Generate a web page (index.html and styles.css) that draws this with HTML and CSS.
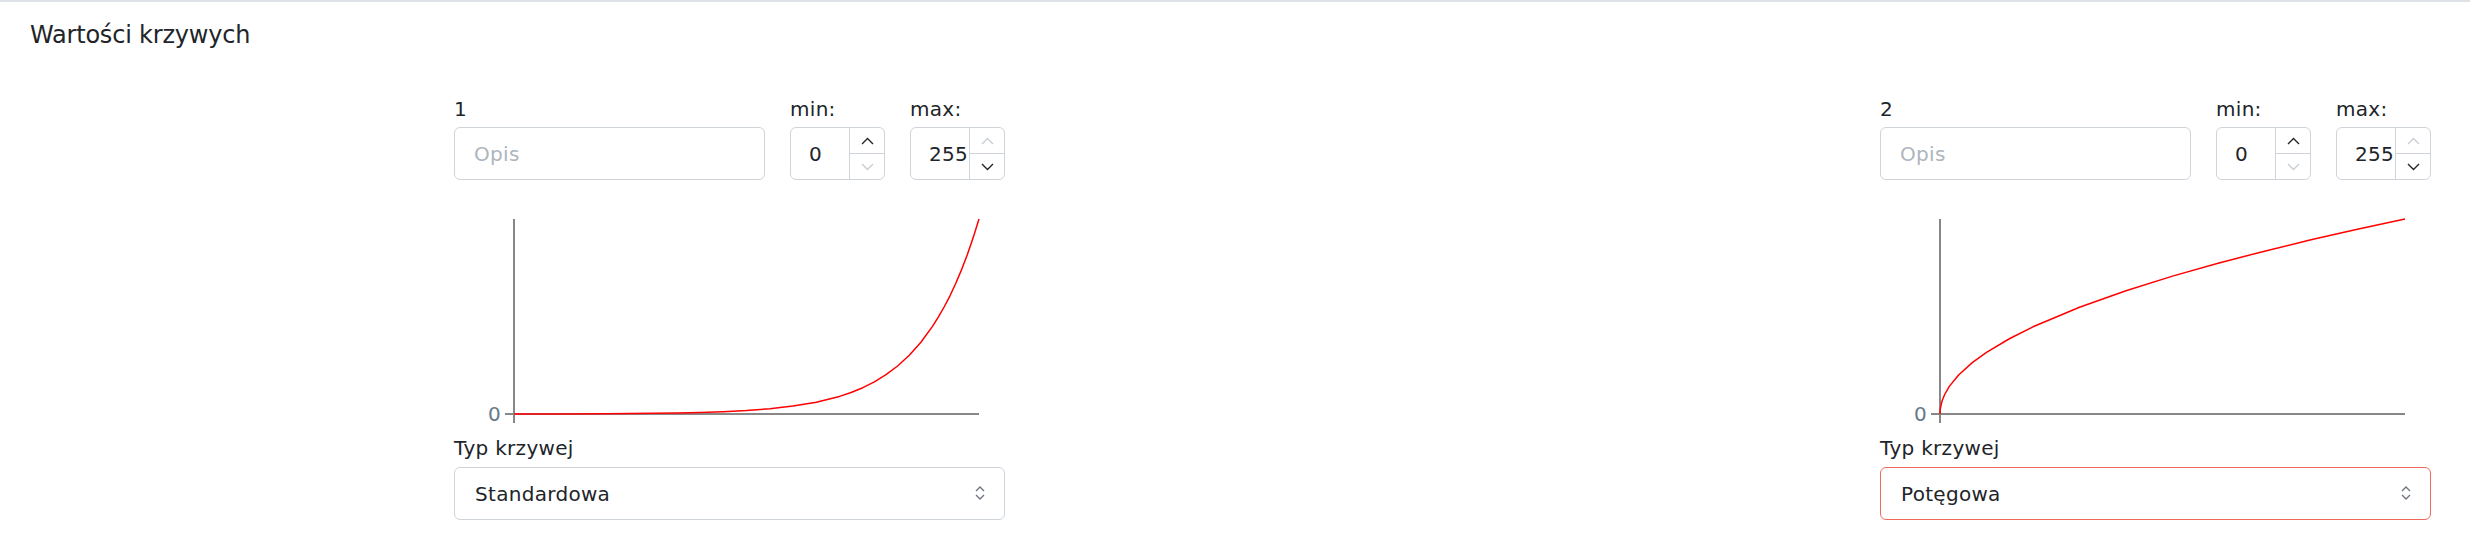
FILE: index.html
```html
<!DOCTYPE html>
<html lang="pl">
  <head>
    <meta charset="utf-8">
    <title>Wartości krzywych</title>
    <link rel="stylesheet" href="styles.css">
  </head>

  <body>
    <div class="card">
      <div class="card-title">Wartości krzywych</div>

      <div class="curves">
        <!-- krzywa 1 -->
        <div class="curve-panel">
          <div class="fields">
            <div class="field">
              <label>1</label>
              <input class="form-control" type="text" placeholder="Opis">
            </div>
            <div class="field">
              <label>min:</label>
              <div class="spin-input">
                <input type="text" value="0">
                <div class="spin-buttons">
                  <span class="spin-btn"><svg width="13" height="8" viewBox="0 0 13 8"><path d="M1 7L6.5 1.5L12 7"/></svg></span>
                  <span class="spin-btn disabled"><svg width="13" height="8" viewBox="0 0 13 8"><path d="M1 1L6.5 6.5L12 1"/></svg></span>
                </div>
              </div>
            </div>
            <div class="field">
              <label>max:</label>
              <div class="spin-input">
                <input type="text" value="255">
                <div class="spin-buttons">
                  <span class="spin-btn disabled"><svg width="13" height="8" viewBox="0 0 13 8"><path d="M1 7L6.5 1.5L12 7"/></svg></span>
                  <span class="spin-btn"><svg width="13" height="8" viewBox="0 0 13 8"><path d="M1 1L6.5 6.5L12 1"/></svg></span>
                </div>
              </div>
            </div>
          </div>

          <svg class="chart" width="551" height="230" viewBox="0 0 551 230">
            <line class="axis" x1="60" y1="19" x2="60" y2="223"/>
            <line class="axis" x1="51" y1="214" x2="525" y2="214"/>
            <text class="axis-label" x="47" y="221" text-anchor="end">0</text>
            <polyline class="curve" points="60,214 106.5,213.9 153,213.7 199.5,213.3 222.8,213 246,212.5 269.3,211.7 292.5,210.5 315.8,208.7 339,206.1 362.3,202.2 385.5,196.4 397.1,192.5 408.8,187.7 420.4,181.8 432,174.7 443.6,166 455.3,155.3 466.9,142.3 478.5,126.4 484.3,117.2 490.1,107 496,95.8 501.8,83.3 507.6,69.6 513.4,54.4 519.2,37.6 525,19"/>
          </svg>

          <label class="type-label">Typ krzywej</label>
          <div class="select-wrap">
            <select class="form-select">
              <option>Standardowa</option>
              <option>Potęgowa</option>
            </select>
            <svg class="select-arrows" width="10" height="16" viewBox="0 0 10 16"><path d="M1 6L5 2L9 6M1 10L5 14L9 10"/></svg>
          </div>
        </div>

        <!-- krzywa 2 -->
        <div class="curve-panel">
          <div class="fields">
            <div class="field">
              <label>2</label>
              <input class="form-control" type="text" placeholder="Opis">
            </div>
            <div class="field">
              <label>min:</label>
              <div class="spin-input">
                <input type="text" value="0">
                <div class="spin-buttons">
                  <span class="spin-btn"><svg width="13" height="8" viewBox="0 0 13 8"><path d="M1 7L6.5 1.5L12 7"/></svg></span>
                  <span class="spin-btn disabled"><svg width="13" height="8" viewBox="0 0 13 8"><path d="M1 1L6.5 6.5L12 1"/></svg></span>
                </div>
              </div>
            </div>
            <div class="field">
              <label>max:</label>
              <div class="spin-input">
                <input type="text" value="255">
                <div class="spin-buttons">
                  <span class="spin-btn disabled"><svg width="13" height="8" viewBox="0 0 13 8"><path d="M1 7L6.5 1.5L12 7"/></svg></span>
                  <span class="spin-btn"><svg width="13" height="8" viewBox="0 0 13 8"><path d="M1 1L6.5 6.5L12 1"/></svg></span>
                </div>
              </div>
            </div>
          </div>

          <svg class="chart" width="551" height="230" viewBox="0 0 551 230">
            <line class="axis" x1="60" y1="19" x2="60" y2="223"/>
            <line class="axis" x1="51" y1="214" x2="525" y2="214"/>
            <text class="axis-label" x="47" y="221" text-anchor="end">0</text>
            <polyline class="curve" points="60,214 60.2,209.6 61.2,204.3 62.3,200.2 64.7,194.5 69.3,186.4 78.6,175 92.6,162.4 106.5,152.3 129.8,138.5 153,126.8 199.5,107.2 246,90.7 292.5,76.1 339,63 385.5,50.9 432,39.6 478.5,29 525,19"/>
          </svg>

          <label class="type-label">Typ krzywej</label>
          <div class="select-wrap">
            <select class="form-select is-invalid">
              <option>Potęgowa</option>
              <option>Standardowa</option>
            </select>
            <svg class="select-arrows" width="10" height="16" viewBox="0 0 10 16"><path d="M1 6L5 2L9 6M1 10L5 14L9 10"/></svg>
          </div>
        </div>
      </div>
    </div>
  </body>
</html>
```

FILE: styles.css
```css
* {
  box-sizing: border-box;
}

body {
  margin: 0;
  background-color: #fff;
  color: #212529;
  font-family: 'DejaVu Sans', sans-serif;
  font-size: 20px;
  letter-spacing: 0.3px;
}

.card {
  border-top: 2px solid #dee2e6;
}

.card-title {
  padding: 15px 30px 0;
  font-size: 24px;
  line-height: 36px;
  letter-spacing: -0.2px;
}

/* two curve editors side by side */
.curves {
  display: grid;
  grid-template-columns: 551px 551px;
  column-gap: 875px;
  padding-left: 454px;
  margin-top: 40px;
}

.curve-panel label {
  display: block;
  line-height: 32px;
  margin-bottom: 2px;
}

.curve-panel .type-label {
  margin-bottom: 3px;
}

.fields {
  display: grid;
  grid-template-columns: 1fr 95px 95px;
  column-gap: 25px;
}

.form-control,
.spin-input,
.form-select {
  height: 53px;
  border: 1px solid #ced4da;
  border-radius: 6px;
  background-color: #fff;
  font-family: inherit;
  font-size: 20px;
  letter-spacing: 0.3px;
  color: #212529;
}

.form-control {
  width: 100%;
  padding: 0 19px;
}

.form-control::placeholder {
  color: #adb5bd;
}

.spin-input {
  display: flex;
  overflow: hidden;
}

.spin-input input {
  flex: 1;
  min-width: 0;
  border: none;
  padding: 0 2px 0 18px;
  background: transparent;
  font: inherit;
  letter-spacing: inherit;
  color: inherit;
}

.spin-buttons {
  width: 35px;
  display: flex;
  flex-direction: column;
  border-left: 1px solid #ced4da;
}

.spin-btn {
  flex: 1;
  display: flex;
  align-items: center;
  justify-content: center;
  color: #212529;
}

.spin-btn:first-child {
  border-bottom: 1px solid #ced4da;
}

.spin-btn.disabled {
  color: #c9ced4;
}

.spin-btn path {
  fill: none;
  stroke: currentColor;
  stroke-width: 1.4;
}

.chart {
  display: block;
  margin-top: 20px;
  margin-bottom: 2px;
}

.axis {
  stroke: #888;
  stroke-width: 2;
}

.axis-label {
  font-family: 'DejaVu Sans', sans-serif;
  font-size: 20px;
  fill: #66788a;
}

.curve {
  fill: none;
  stroke: #ff0000;
  stroke-width: 1.5;
  stroke-linejoin: round;
}

.select-wrap {
  position: relative;
}

.form-select {
  display: block;
  width: 100%;
  padding: 0 50px 0 20px;
  appearance: none;
  -webkit-appearance: none;
}

.form-select.is-invalid {
  border-color: #f06b5d;
}

.select-arrows {
  position: absolute;
  right: 20px;
  top: 18px;
  pointer-events: none;
}

.select-arrows path {
  fill: none;
  stroke: #6c757d;
  stroke-width: 1.3;
}
```
